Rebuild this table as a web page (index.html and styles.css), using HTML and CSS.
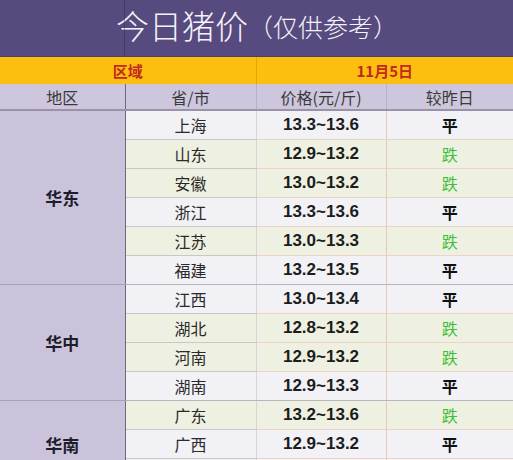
FILE: index.html
```html
<!DOCTYPE html>
<html lang="zh">
<head>
<meta charset="utf-8">
<title>今日猪价</title>
<link rel="stylesheet" href="styles.css">
</head>
<body>
<div class="page">
  <div class="title">
    <span class="title-main">今日猪价</span><span class="title-sub">（仅供参考）</span>
    <span class="title-line"></span>
  </div>
  <table class="prices">
    <colgroup>
      <col class="c-region"><col class="c-prov"><col class="c-price"><col class="c-chg">
    </colgroup>
    <tr class="band">
      <td colspan="2" class="band-left">区域</td>
      <td colspan="2">11月5日</td>
    </tr>
    <tr class="head">
      <th class="region-h">地区</th>
      <th class="prov-h">省/市</th>
      <th>价格(元/斤)</th>
      <th>较昨日</th>
    </tr>
    <tr class="w">
      <td class="region" rowspan="6">华东</td>
      <td class="prov">上海</td><td class="price">13.3~13.6</td><td class="chg">平</td>
    </tr>
    <tr class="g"><td class="prov">山东</td><td class="price">12.9~13.2</td><td class="chg down">跌</td></tr>
    <tr class="g"><td class="prov">安徽</td><td class="price">13.0~13.2</td><td class="chg down">跌</td></tr>
    <tr class="w"><td class="prov">浙江</td><td class="price">13.3~13.6</td><td class="chg">平</td></tr>
    <tr class="g"><td class="prov">江苏</td><td class="price">13.0~13.3</td><td class="chg down">跌</td></tr>
    <tr class="w last"><td class="prov">福建</td><td class="price">13.2~13.5</td><td class="chg">平</td></tr>
    <tr class="w">
      <td class="region" rowspan="4">华中</td>
      <td class="prov">江西</td><td class="price">13.0~13.4</td><td class="chg">平</td>
    </tr>
    <tr class="g"><td class="prov">湖北</td><td class="price">12.8~13.2</td><td class="chg down">跌</td></tr>
    <tr class="g"><td class="prov">河南</td><td class="price">12.9~13.2</td><td class="chg down">跌</td></tr>
    <tr class="w last"><td class="prov">湖南</td><td class="price">12.9~13.3</td><td class="chg">平</td></tr>
    <tr class="g">
      <td class="region" rowspan="3">华南</td>
      <td class="prov">广东</td><td class="price">13.2~13.6</td><td class="chg down">跌</td>
    </tr>
    <tr class="w"><td class="prov">广西</td><td class="price">12.9~13.2</td><td class="chg">平</td></tr>
    <tr class="w"><td class="prov">&nbsp;</td><td class="price">&nbsp;</td><td class="chg">&nbsp;</td></tr>
  </table>
</div>
</body>
</html>
```

FILE: styles.css
```css
html, body {
  margin: 0;
  padding: 0;
  overflow: hidden;
  background: #f0f0f5;
}
.page {
  width: 513px;
  font-family: "Noto Sans CJK SC", "Liberation Sans", sans-serif;
}
.title {
  position: relative;
  height: 57px;
  background: #574a7e;
  color: #f4f2f8;
  display: flex;
  align-items: center;
  padding-left: 116px;
  box-sizing: border-box;
  border-bottom: 1px solid #4a3f6c;
  text-spacing-trim: space-all;
}
.title-main {
  font-size: 33px;
  font-weight: 300;
  line-height: 1;
  margin-top: -6px;
}
.title-sub {
  font-size: 25px;
  font-weight: 300;
  line-height: 1;
  margin-top: -4px;
  margin-left: 0;
}
.title-line {
  position: absolute;
  left: 124px;
  top: 0;
  bottom: 0;
  width: 1px;
  background: rgba(40, 30, 60, 0.35);
}
.prices {
  width: 513px;
  border-collapse: collapse;
  table-layout: fixed;
}
.c-region { width: 125px; }
.c-prov { width: 131px; }
.c-price { width: 130px; }
.c-chg { width: 127px; }
.prices td, .prices th {
  padding: 0;
  text-align: center;
  vertical-align: middle;
}
.band td {
  height: 27px;
  background: #fdbf0f;
  color: #c2281c;
  font-weight: bold;
  font-size: 15px;
  border-left: 1px solid #e0a800;
}
.band td:first-child { border-left: none; }
.band-left {
  background-image: linear-gradient(#6a5f72, #6a5f72);
  background-size: 1px 100%;
  background-position: 124px 0;
  background-repeat: no-repeat;
}
.head th {
  height: 25px;
  background: #cdc6dd;
  color: #3a3a3a;
  font-weight: normal;
  font-size: 16px;
  border-bottom: 2px solid #9a93a8;
  border-left: 1px solid #b8b0c8;
}
.head th.region-h { border-left: none; }
.head th.prov-h { border-left: 1px solid #6e6878; }
.prices td.region {
  background: #cbc3dc;
  color: #1e1e2a;
  font-weight: bold;
  font-size: 17px;
  border-right: 1px solid #6e6878;
  border-bottom: 1px solid #a9a1b8;
}
tr.w td.prov, tr.w td.price, tr.w td.chg { background: #f1f1f6; }
tr.g td.prov, tr.g td.price, tr.g td.chg { background: #eef1e1; }
.prov {
  height: 28px;
  font-size: 16px;
  color: #2a2a2a;
  border-bottom: 1px solid #c8c8c8;
  border-right: 1px solid #d8d4d8;
}
.price {
  font-family: "Liberation Sans", "Noto Sans CJK SC", sans-serif;
  font-weight: bold;
  font-size: 17px;
  color: #1c1c1c;
  border-bottom: 1px solid #ecd4c4;
  border-right: 1px solid #ecc8b4;
}
.chg {
  font-weight: bold;
  font-size: 16px;
  color: #111;
  border-bottom: 1px solid #ecd4c4;
}
.chg.down { color: #3cbf36; font-weight: normal; }
tr.last td { border-bottom-color: #b8b4c0; }
```
